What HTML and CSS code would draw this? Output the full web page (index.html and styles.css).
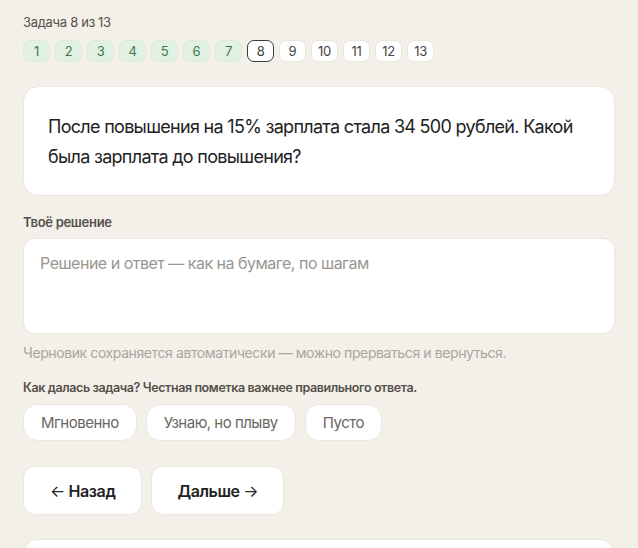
FILE: index.html
```html
<!DOCTYPE html>
<html lang="ru">
<head>
    <meta charset="UTF-8">
    <meta name="viewport" content="width=device-width, initial-scale=1.0">
    <title>Задача 8 из 13</title>
    <link rel="stylesheet" href="styles.css">
</head>
<body>
    <div class="page">
        <div class="task-count">Задача 8 из 13</div>

        <!-- Task progress -->
        <div class="steps">
            <span class="step done">1</span>
            <span class="step done">2</span>
            <span class="step done">3</span>
            <span class="step done">4</span>
            <span class="step done">5</span>
            <span class="step done">6</span>
            <span class="step done">7</span>
            <span class="step current">8</span>
            <span class="step">9</span>
            <span class="step">10</span>
            <span class="step">11</span>
            <span class="step">12</span>
            <span class="step">13</span>
        </div>

        <div class="question-card">
            После повышения на 15% зарплата стала 34 500 рублей. Какой была зарплата до повышения?
        </div>

        <label class="field-label" for="solution">Твоё решение</label>
        <textarea class="solution" id="solution" placeholder="Решение и ответ — как на бумаге, по шагам"></textarea>
        <p class="hint">Черновик сохраняется автоматически — можно прерваться и вернуться.</p>

        <p class="rate-label">Как далась задача? Честная пометка важнее правильного ответа.</p>
        <div class="chips">
            <button class="chip">Мгновенно</button>
            <button class="chip">Узнаю, но плыву</button>
            <button class="chip">Пусто</button>
        </div>

        <div class="nav">
            <button class="nav-btn"><span class="arrow">←</span> Назад</button>
            <button class="nav-btn next">Дальше <span class="arrow">→</span></button>
        </div>

        <div class="bottom-card"></div>
    </div>
</body>
</html>
```

FILE: styles.css
```css
/* General Reset */
* {
    margin: 0;
    padding: 0;
    box-sizing: border-box;
    font-family: Inter, "Noto Sans", sans-serif;
}

body {
    background-color: #f3f0ea;
    color: #222;
}

.page {
    padding: 14px 23px 0;
}

.task-count {
    font-size: 13px;
    color: #555049;
    letter-spacing: -0.3px;
    line-height: 17px;
}

/* Progress pills */
.steps {
    display: flex;
    gap: 5px;
    margin-top: 9px;
}

.step {
    min-width: 27px;
    height: 22px;
    padding: 0 5px;
    display: flex;
    align-items: center;
    justify-content: center;
    font-size: 13px;
    letter-spacing: -0.3px;
    color: #444;
    background: #fff;
    border: 1px solid #ebe7df;
    border-radius: 7px;
}

.step.done {
    background: #e3f0e4;
    border-color: #dcebdd;
    color: #3f7a4e;
}

.step.current {
    border-color: #3a3a3a;
}

.question-card {
    margin-top: 24px;
    background: #fff;
    border: 1px solid #ebe7df;
    border-radius: 15px;
    padding: 25px 24px 22px;
    font-size: 18px;
    line-height: 30px;
    letter-spacing: -0.7px;
    color: #222;
    height: 110px;
}

.field-label {
    display: block;
    margin-top: 18px;
    font-size: 13px;
    font-weight: 600;
    color: #555049;
    letter-spacing: -0.3px;
}

.solution {
    display: block;
    width: 100%;
    height: 96px;
    margin-top: 8px;
    padding: 14px 16px;
    font-size: 16px;
    letter-spacing: -0.5px;
    border: 1px solid #ebe7df;
    border-radius: 12px;
    background: #fff;
    resize: none;
    outline: none;
}

.solution::placeholder {
    color: #9a968f;
}

.hint {
    margin-top: 10px;
    font-size: 14px;
    color: #aaa59d;
    letter-spacing: -0.4px;
}

.rate-label {
    margin-top: 19px;
    font-size: 12.5px;
    font-weight: 600;
    color: #555049;
    letter-spacing: -0.4px;
}

.chips {
    display: flex;
    gap: 9px;
    margin-top: 9px;
}

.chip {
    height: 37px;
    padding: 0 17px;
    font-size: 15px;
    letter-spacing: -0.5px;
    color: #6a665f;
    background: #fff;
    border: 1px solid #ebe7df;
    border-radius: 14px;
}

.nav {
    display: flex;
    gap: 9px;
    margin-top: 25px;
}

.nav-btn {
    height: 49px;
    padding: 0 26px;
    font-size: 16px;
    font-weight: 600;
    letter-spacing: -0.4px;
    color: #222;
    background: #fff;
    border: 1px solid #ebe7df;
    border-radius: 12px;
}

.nav-btn.next {
    padding: 0 25px;
}

.arrow {
    font-weight: 400;
}

.bottom-card {
    margin-top: 24px;
    height: 40px;
    background: #fff;
    border: 1px solid #ebe7df;
    border-radius: 15px;
}
```
